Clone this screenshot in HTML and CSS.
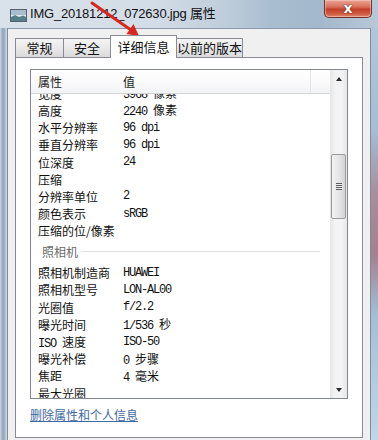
FILE: index.html
```html
<!DOCTYPE html>
<html lang="zh-CN">
<head>
<meta charset="utf-8">
<title>属性</title>
<link rel="stylesheet" href="styles.css">
</head>
<body>
<div class="window">
  <div class="titlebar">
    <svg class="app-icon" width="17" height="13" viewBox="0 0 17 13">
      <rect x="0.5" y="0.5" width="16" height="12" fill="#e4ecf1" stroke="#56636e"/>
      <rect x="1" y="1" width="15" height="5" fill="#a7bdcb"/>
      <path d="M1 12 L1 8 L5 6 L9 8 L13 6.5 L16 8 L16 12 Z" fill="#557f86"/>
    </svg>
    <span class="title">IMG_20181212_072630.jpg 属性</span>
    <div class="close"><span class="close-x">x</span></div>
  </div>
  <div class="frame-body">
    <div class="frame-left"></div>
    <div class="client">
      <div class="tabs">
        <div class="tab tab-1">常规</div>
        <div class="tab tab-2">安全</div>
        <div class="tab tab-active">详细信息</div>
        <div class="tab tab-4">以前的版本</div>
      </div>
      <div class="panel">
        <div class="list">
          <div class="list-main">
            <div class="list-head">
              <span class="col-name">属性</span>
              <span class="col-val">值</span>
            </div>
            <div class="list-body">
              <div class="rows">
                <div class="row"><span class="k">宽度</span><span class="v">3968 <span class="u">像素</span></span></div>
                <div class="row"><span class="k">高度</span><span class="v">2240 <span class="u">像素</span></span></div>
                <div class="row"><span class="k">水平分辨率</span><span class="v">96 dpi</span></div>
                <div class="row"><span class="k">垂直分辨率</span><span class="v">96 dpi</span></div>
                <div class="row"><span class="k">位深度</span><span class="v">24</span></div>
                <div class="row"><span class="k">压缩</span><span class="v"></span></div>
                <div class="row"><span class="k">分辨率单位</span><span class="v">2</span></div>
                <div class="row"><span class="k">颜色表示</span><span class="v">sRGB</span></div>
                <div class="row"><span class="k">压缩的位/像素</span><span class="v"></span></div>
                <div class="group"><span class="group-name">照相机</span><span class="group-line"></span></div>
                <div class="row"><span class="k">照相机制造商</span><span class="v">HUAWEI</span></div>
                <div class="row"><span class="k">照相机型号</span><span class="v">LON-AL00</span></div>
                <div class="row"><span class="k">光圈值</span><span class="v">f/2.2</span></div>
                <div class="row"><span class="k">曝光时间</span><span class="v">1/536 <span class="u">秒</span></span></div>
                <div class="row"><span class="k"><span class="m">ISO </span>速度</span><span class="v">ISO-50</span></div>
                <div class="row"><span class="k">曝光补偿</span><span class="v">0 <span class="u">步骤</span></span></div>
                <div class="row"><span class="k">焦距</span><span class="v">4 <span class="u">毫米</span></span></div>
                <div class="row"><span class="k">最大光圈</span><span class="v"></span></div>
              </div>
            </div>
          </div>
          <div class="scrollbar">
            <div class="sb-btn"><span class="tri-up"></span></div>
            <div class="sb-track">
              <div class="sb-thumb"><span class="grip"></span></div>
            </div>
            <div class="sb-btn"><span class="tri-down"></span></div>
          </div>
        </div>
        <a class="link" href="#">删除属性和个人信息</a>
      </div>
    </div>
    <div class="frame-right"></div>
  </div>
</div>
<svg class="annot-arrow" width="378" height="440" viewBox="0 0 378 440">
  <line x1="92" y1="3" x2="131" y2="30" stroke="#d9261e" stroke-width="3" stroke-linecap="round"/>
  <polygon points="139,36 126.5,34 133.5,24" fill="#d9261e"/>
</svg>
</body>
</html>
```

FILE: styles.css
```css
html, body {
  margin: 0;
  padding: 0;
}
body {
  width: 378px;
  height: 440px;
  overflow: hidden;
  position: relative;
  font-family: "Noto Sans CJK SC", "Liberation Sans", sans-serif;
  background: #c6d4e1;
}
.window {
  height: 440px;
  display: flex;
  flex-direction: column;
}
.titlebar {
  height: 28px;
  flex: none;
  display: flex;
  align-items: flex-start;
  background: linear-gradient(90deg, #d9e2ea 0%, #d3dde7 40%, #c1cfdc 58%, #a9bdd0 72%, #a3b8cc 84%, #b7c8d8 100%);
}
.app-icon {
  margin: 9px 0 0 10px;
  flex: none;
}
.title {
  margin-left: 3px;
  font-family: "Liberation Sans", "Noto Sans CJK SC", sans-serif;
  font-size: 13px;
  letter-spacing: -0.2px;
  line-height: 28px;
  color: #111;
}
.close {
  margin-left: auto;
  margin-right: 6px;
  width: 48px;
  height: 18px;
  box-sizing: border-box;
  border: 1px solid #74332a;
  border-top: none;
  border-radius: 0 0 5px 5px;
  background: linear-gradient(#e8a595 0%, #d9705b 40%, #c2402a 55%, #cf5a40 80%, #e0896f 100%);
  display: flex;
  align-items: center;
  justify-content: center;
  box-shadow: inset 0 0 0 1px rgba(255, 220, 210, 0.45);
}
.close-x {
  font-family: "DejaVu Sans", sans-serif;
  font-weight: bold;
  font-size: 14px;
  line-height: 14px;
  color: #fff;
  margin-top: -1px;
  text-shadow: 0 0 1px #4a1a12, 0 0 1px #4a1a12;
}
.frame-body {
  flex: 1;
  display: flex;
  min-height: 0;
}
.frame-left {
  width: 7px;
  flex: none;
  border-right: 1px solid #7d8c9b;
  background: linear-gradient(90deg, #c9d7e4 0px, #9fb2c4 2px, #8fa3b6 4px, #c3d2df 6px);
}
.frame-right {
  width: 7px;
  flex: none;
  border-left: 1px solid #7d8c9b;
  background: linear-gradient(#b2c6d9 0%, #a6bdd3 25%, #a88e9c 40%, #a5808f 55%, #a4c0d6 70%, #c1d6e6 100%);
}
.client {
  flex: 1;
  min-width: 0;
  background: #f0f0f0;
  border-top: 1px solid #8a98a8;
  padding: 6px 7px 0 7px;
  display: flex;
  flex-direction: column;
}
.tabs {
  height: 22px;
  flex: none;
  display: flex;
  align-items: flex-end;
}
.tab {
  height: 19px;
  box-sizing: border-box;
  border: 1px solid #898c95;
  border-bottom: none;
  background: linear-gradient(#f4f4f4, #e9e9e9 50%, #dadada);
  font-size: 13px;
  line-height: 18px;
  color: #111;
  text-align: center;
  margin-left: -1px;
}
.tab-1 {
  width: 49px;
  margin-left: 0;
}
.tab-2 {
  width: 48px;
}
.tab-active {
  width: 67px;
  height: 23px;
  margin-bottom: -1px;
  background: #fff;
  position: relative;
  z-index: 1;
  line-height: 21px;
}
.tab-4 {
  width: 67px;
}
.panel {
  height: 381px;
  flex: none;
  box-sizing: border-box;
  border: 1px solid #898c95;
  background: #fff;
  padding: 11px 14px 0 14px;
  display: flex;
  flex-direction: column;
}
.list {
  height: 330px;
  flex: none;
  box-sizing: border-box;
  border: 1px solid #828790;
  display: flex;
}
.list-main {
  flex: 1;
  min-width: 0;
  display: flex;
  flex-direction: column;
}
.list-head {
  height: 24px;
  flex: none;
  box-sizing: border-box;
  border-bottom: 1px solid #d5d5d5;
  background: linear-gradient(#ffffff, #fbfbfc 45%, #f2f3f5);
  display: flex;
  font-size: 12px;
  color: #1a1a1a;
}
.col-name {
  width: 92px;
  box-sizing: border-box;
  padding-left: 7px;
  line-height: 23px;
}
.col-val {
  width: 188px;
  box-sizing: border-box;
  border-right: 1px solid #e2e4e8;
  line-height: 23px;
}
.list-body {
  flex: 1;
  overflow: hidden;
}
.rows {
  margin-top: -9.3px;
}
.row {
  height: 17.2px;
  display: flex;
  align-items: center;
  font-size: 12px;
  color: #111;
  white-space: pre;
}
.k {
  width: 92px;
  flex: none;
  box-sizing: border-box;
  padding-left: 7px;
}
.m {
  font-family: "Liberation Mono", monospace;
  letter-spacing: -1.2px;
}
.v {
  font-family: "Liberation Mono", "Noto Sans CJK SC", monospace;
  font-size: 12px;
  letter-spacing: -1.2px;
}
.u {
  font-family: "Noto Sans CJK SC", sans-serif;
  letter-spacing: 0;
}
.group {
  height: 24.8px;
  display: flex;
  align-items: center;
  padding-left: 11px;
  padding-right: 10px;
}
.group-name {
  font-size: 12px;
  color: #6a6a6a;
}
.group-line {
  flex: 1;
  margin-left: 3px;
  border-top: 1px solid #e2e2e2;
}
.scrollbar {
  width: 17px;
  flex: none;
  display: flex;
  flex-direction: column;
  background: linear-gradient(90deg, #e6e6e6, #f3f3f3 30%, #f3f3f3 70%, #e6e6e6);
}
.sb-btn {
  height: 17px;
  flex: none;
  display: flex;
  align-items: center;
  justify-content: center;
}
.tri-up {
  width: 0;
  height: 0;
  border-left: 3.5px solid transparent;
  border-right: 3.5px solid transparent;
  border-bottom: 4px solid #2a2a2a;
}
.tri-down {
  width: 0;
  height: 0;
  border-left: 3.5px solid transparent;
  border-right: 3.5px solid transparent;
  border-top: 4px solid #2a2a2a;
}
.sb-track {
  flex: 1;
}
.sb-thumb {
  margin: 67px 1px 0 1px;
  height: 65px;
  box-sizing: border-box;
  border: 1px solid #9a9a9a;
  border-radius: 2px;
  background: linear-gradient(90deg, #f2f2f2, #e6e6e6 50%, #d4d4d4);
  display: flex;
  align-items: center;
  justify-content: center;
}
.grip {
  width: 6px;
  height: 7px;
  background: repeating-linear-gradient(#5a5a5a 0 1px, #f0f0f0 1px 2px);
}
.link {
  margin-top: 7px;
  align-self: flex-start;
  font-size: 12px;
  line-height: 17px;
  color: #3d68a3;
  text-decoration: underline;
}
.annot-arrow {
  position: absolute;
  left: 0;
  top: 0;
  pointer-events: none;
}
```
